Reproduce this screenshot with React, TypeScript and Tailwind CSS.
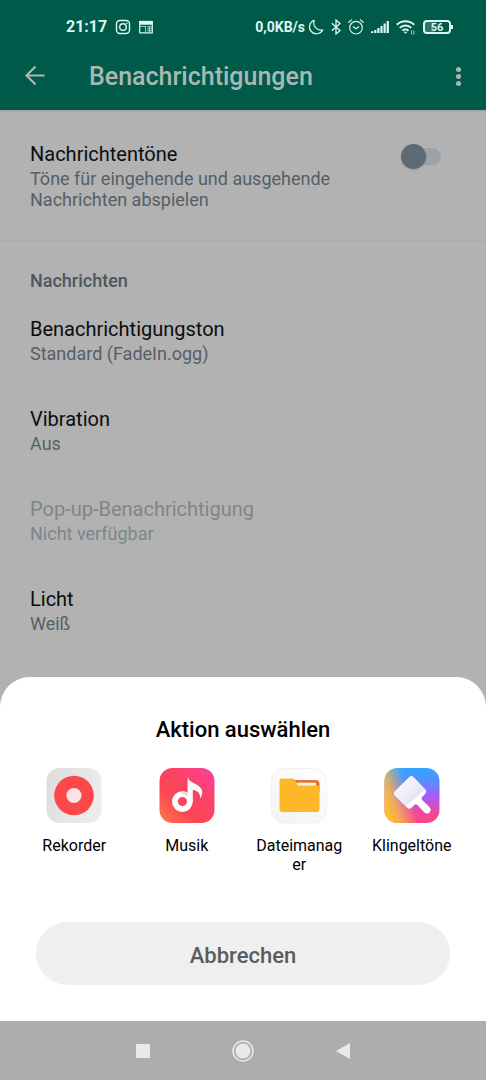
import { useState } from "react";

const settings = [
    { title: "Benachrichtigungston", value: "Standard (FadeIn.ogg)" },
    { title: "Vibration", value: "Aus" },
    { title: "Pop-up-Benachrichtigung", value: "Nicht verfügbar", disabled: true },
    { title: "Licht", value: "Weiß" },
];

const apps = [
    { name: "Rekorder", Icon: RecorderIcon },
    { name: "Musik", Icon: MusicIcon },
    { name: "Dateimanager", Icon: FilesIcon },
    { name: "Klingeltöne", Icon: ThemesIcon },
];

function RecorderIcon() {
    return (
        <svg viewBox="0 0 56 56" className="size-14" aria-hidden="true">
            <defs>
                <linearGradient id="rec-bg" x1="0" y1="0" x2="1" y2="0.4">
                    <stop offset="0" stopColor="#dcdcdc" />
                    <stop offset="1" stopColor="#ececec" />
                </linearGradient>
            </defs>
            <rect x="0.5" y="0" width="55" height="55" rx="13" fill="url(#rec-bg)" />
            <circle cx="28" cy="27.500" r="19.8" fill="#fc4848" />
            <circle cx="28" cy="27.500" r="7.6" fill="#f8e4e4" />
        </svg>
    );
}

function MusicIcon() {
    return (
        <svg viewBox="0 0 56 56" className="size-14" aria-hidden="true">
            <defs>
                <linearGradient id="mus-bg" x1="0" y1="1" x2="1" y2="0">
                    <stop offset="0" stopColor="#ff7a45" />
                    <stop offset="0.35" stopColor="#fb4654" />
                    <stop offset="0.65" stopColor="#fa4368" />
                    <stop offset="1" stopColor="#fb3fa6" />
                </linearGradient>
            </defs>
            <rect x="0.5" y="0" width="55" height="55" rx="13" fill="url(#mus-bg)" />
            <circle cx="23.4" cy="33.6" r="7.5" fill="none" stroke="#fff" strokeWidth="5.8" />
            <path d="M22.500 23.300a10.400 10.400 0 0 1 6.500 1.700v4a8 8 0 0 0-6.500-3z" fill="#ffd3da" />
            <path d="M28.600 9c.6 3 3.200 4.800 7.400 6.800 5 2.400 8.200 5.700 7 10.800-.4 1.500-1 2.800-2 3.900.7-4.600-2-7.800-7.200-8.800v12h-5.200z" fill="#fff" />
        </svg>
    );
}

function FilesIcon() {
    return (
        <svg viewBox="0 0 56 56" className="size-14" aria-hidden="true">
            <defs>
                <linearGradient id="file-bg" x1="0" y1="1" x2="0.6" y2="0">
                    <stop offset="0" stopColor="#f3f3f3" />
                    <stop offset="1" stopColor="#fcfcfc" />
                </linearGradient>
            </defs>
            <rect x="0.5" y="0.5" width="55" height="54.500" rx="13" fill="url(#file-bg)" stroke="#f1f1f1" />
            <path d="M20 12h25a3.500 3.500 0 0 1 3.500 3.500V24H20z" fill="#e0763a" />
            <rect x="24" y="14.800" width="21" height="6" rx="1" fill="#fff3e6" />
            <path d="M11 10.500h10.500c1.200 0 2 .4 2.500 1.400l2 4c.6 1.200 1.400 1.600 2.600 1.600H46a2.500 2.500 0 0 1 2.500 2.500V41a3 3 0 0 1-3 3H11.500a3 3 0 0 1-3-3V13a2.500 2.500 0 0 1 2.500-2.500z" fill="#fdb827" />
        </svg>
    );
}

function ThemesIcon() {
    return (
        <svg viewBox="0 0 56 56" className="size-14" aria-hidden="true">
            <defs>
                <clipPath id="thm-clip"><rect x="0.5" y="0" width="55" height="55" rx="13" /></clipPath>
                <linearGradient id="thm-base" x1="0.5" y1="0" x2="0.5" y2="1">
                    <stop offset="0" stopColor="#2fa8ff" />
                    <stop offset="0.25" stopColor="#5a8cff" />
                    <stop offset="0.5" stopColor="#a65cf8" />
                    <stop offset="0.8" stopColor="#f0489c" />
                    <stop offset="1" stopColor="#ff437c" />
                </linearGradient>
                <linearGradient id="thm-yellow" x1="0" y1="0.6" x2="0.45" y2="0.45">
                    <stop offset="0" stopColor="#fcc02c" />
                    <stop offset="0.35" stopColor="#f5b84c" stopOpacity="0.85" />
                    <stop offset="1" stopColor="#f5b84c" stopOpacity="0" />
                </linearGradient>
                <linearGradient id="thm-brush" x1="0" y1="0" x2="1" y2="1">
                    <stop offset="0" stopColor="#fff" />
                    <stop offset="1" stopColor="#dcdaf3" />
                </linearGradient>
            </defs>
            <g clipPath="url(#thm-clip)">
                <rect width="56" height="56" fill="url(#thm-base)" />
                <rect width="56" height="56" fill="url(#thm-yellow)" />
            </g>
            <path d="M25.300 9.300a3 3 0 0 1 4.200 0L41.200 21.500a3 3 0 0 1 0 4.200l-3 3.300c-1 1.100-.8 2 .1 3l7.200 7.300a3.600 3.600 0 0 1-5.200 5l-7-7.300c-1-1-2-1-3 0L27.500 39.700a3 3 0 0 1-4.200 0L11 27.500a3 3 0 0 1 0-4.200z" fill="#fff" />
            <path d="M25.300 9.300a3 3 0 0 1 4.200 0L41 21.300 22 38.500 11 27.500a3 3 0 0 1 0-4.200z" fill="url(#thm-brush)" />
        </svg>
    );
}

function StatusBar() {
    return (
        <div className="flex h-[30px] items-center justify-between pr-[33px] pl-[66px] text-[#daf8ef]">
            <div className="flex items-center gap-2">
                <span className="text-base font-bold">21:17</span>
                <svg viewBox="0 0 16 16" className="size-4" fill="none" stroke="currentColor" strokeWidth="1.400" aria-hidden="true">
                    <rect x="1.500" y="1.500" width="13" height="13" rx="3.500" />
                    <circle cx="8" cy="8" r="3.300" />
                    <circle cx="11.800" cy="4.200" r="0.500" fill="currentColor" strokeWidth="0.600" />
                </svg>
                <svg viewBox="0 0 14 14" className="size-3.5" aria-hidden="true">
                    <path d="M.7 1.500h12.600v11.300H.7z" fill="none" stroke="currentColor" strokeWidth="1.200" />
                    <path d="M.2 1.500 1.500.5l1.300 1 1.300-1 1.400 1 1.500-1 1.400 1 1.400-1 1.300 1 1.300-1 1.400 1v3.300H.2z" fill="currentColor" />
                    <path d="M1 6.500h5.500M6.500 6v6.500M8 6.800h5M8 8.800h5M8 10.800h5M10.400 6v6.500" stroke="currentColor" strokeWidth="0.700" />
                </svg>
            </div>
            <div className="flex items-center gap-[7px]">
                <div className="flex items-center gap-[3px]">
                    <span className="text-sm font-bold">0,0KB/s</span>
                    <svg viewBox="0 0 16 16" className="size-4" fill="none" stroke="currentColor" strokeWidth="1.200" strokeLinejoin="round" aria-hidden="true">
                        <path d="M6.200 1.200A7 7 0 1 0 14.800 10.800 A7.300 7.300 0 0 1 6.200 1.200z" />
                    </svg>
                </div>
                <svg viewBox="0 0 10 16" className="h-4 w-2.5" fill="none" stroke="currentColor" strokeWidth="1.300" aria-hidden="true">
                    <path d="M.8 4.300 9 11.600 5 15V1l4 3.400L.8 11.700" />
                </svg>
                <svg viewBox="0 0 16 16" className="size-4" fill="none" stroke="currentColor" strokeWidth="1.200" strokeLinecap="round" aria-hidden="true">
                    <circle cx="8" cy="8.700" r="6.300" />
                    <path d="M.8 3.300 3.600.9M15.200 3.300 12.400.9M5.200 7.800 8 9.800l2.800-2" />
                </svg>
                <svg viewBox="0 0 18 14" className="h-3.5 w-[18px]" fill="currentColor" aria-hidden="true">
                    <path d="M0 11.300h2.300V13H0zM3.200 10h2.200v3H3.200zM6.300 8h2.200v5H6.300zM9.400 6h2.200v7H9.400zM12.500 3.500h2.200V13h-2.200zM15.600 1h2.300v12h-2.300z" />
                </svg>
                <svg viewBox="0 0 20 16" className="h-4 w-5" fill="none" stroke="currentColor" strokeWidth="1.900" aria-hidden="true">
                    <path d="M.8 5.800a12.500 12.500 0 0 1 17.400 0M3.700 8.900a8.300 8.300 0 0 1 11.600 0M6.500 11.700a4.300 4.300 0 0 1 6 0" />
                    <path d="m9.500 14.800-1.600-1.600a2.300 2.300 0 0 1 3.200 0z" fill="currentColor" strokeWidth="0" />
                    <path d="M15.600 11.500v4M17.900 11.500v4" strokeWidth="0.800" />
                </svg>
                <div className="flex items-center">
                    <span className="flex h-3.5 w-7 items-center justify-center rounded-sm border-2 border-current bg-linear-to-r from-[#2f7565] from-40% to-transparent to-40% text-[11px] leading-none font-bold">
                        56
                    </span>
                    <span className="h-1 w-0.5 bg-current" />
                </div>
            </div>
        </div>
    );
}

export default function App() {
    const [sounds, setSounds] = useState(false);

    return (
        <div className="flex min-h-screen flex-col bg-[#b2b2b2] font-[Roboto,sans-serif]">
            <header className="bg-[#005a49] pt-3 shadow-sm">
                <StatusBar />
                <div className="flex h-[68px] items-center pr-4 pl-6 text-[#a9b8b2]">
                    <button type="button" aria-label="Zurück" className="mr-[43px]">
                        <svg viewBox="0 0 22 22" className="size-[22px]" fill="none" stroke="currentColor" strokeWidth="2.200" aria-hidden="true">
                            <path d="M20.500 10.500H3M11.500 1.500 2.500 10.500l9 9" />
                        </svg>
                    </button>
                    <h1 className="flex-1 pt-0.5 text-[25px] font-medium">Benachrichtigungen</h1>
                    <button type="button" aria-label="Weitere Optionen" className="flex w-6 flex-col items-center gap-0.5">
                        <span className="size-[5px] rounded-full bg-current" />
                        <span className="size-[5px] rounded-full bg-current" />
                        <span className="size-[5px] rounded-full bg-current" />
                    </button>
                </div>
            </header>

            <main className="flex-1 text-[#0a0d0f]">
                <label className="flex items-start justify-between border-b border-[#aaabac] pt-8 pr-[45px] pb-[30px] pl-[30px]">
                    <span className="flex max-w-[310px] flex-col gap-0.5">
                        <span className="text-xl leading-6">Nachrichtentöne</span>
                        <span className="text-lg leading-[21px] text-[#555f66]">Töne für eingehende und ausgehende Nachrichten abspielen</span>
                    </span>
                    <span className="relative mt-0.5 flex h-[25px] w-10 items-center justify-end">
                        <input
                            type="checkbox"
                            role="switch"
                            checked={sounds}
                            onChange={(e) => setSounds(e.target.checked)}
                            className="peer h-[17px] w-9 appearance-none rounded-full bg-[#9ca3a8]"
                        />
                        <span className="absolute top-0 left-0 size-[25px] rounded-full bg-[#5d6b74] shadow-sm peer-checked:left-[15px]" />
                    </span>
                </label>

                <h2 className="mb-[3px] pt-7 pl-[30px] text-lg leading-6 font-medium text-[#4d575e]">Nachrichten</h2>
                {settings.map((item) => (
                    <button
                        key={item.title}
                        type="button"
                        disabled={item.disabled}
                        className="flex w-full flex-col gap-0.5 px-[30px] pt-[21px] pb-[22px] text-left disabled:text-[#7d868b]"
                    >
                        <span className="text-xl leading-6">{item.title}</span>
                        <span className={item.disabled ? "text-lg leading-[21px]" : "text-lg leading-[21px] text-[#555f66]"}>{item.value}</span>
                    </button>
                ))}
            </main>

            <section role="dialog" aria-labelledby="sheet-title" className="rounded-t-[30px] bg-white pt-[41px] pb-9 text-black">
                <h2 id="sheet-title" className="text-center text-[22px] leading-6 font-medium">Aktion auswählen</h2>
                <div className="mt-[26px] grid grid-cols-4 px-[18px]">
                    {apps.map(({ name, Icon }) => (
                        <button key={name} type="button" className="flex flex-col items-center gap-3">
                            <Icon />
                            <span className="w-[92px] text-base leading-[19px] break-all">{name}</span>
                        </button>
                    ))}
                </div>
                <div className="mt-12 px-9">
                    <button type="button" className="h-[63px] w-full rounded-full bg-[#efefef] pt-1 text-[22px] font-medium text-[#5c5c5c]">
                        Abbrechen
                    </button>
                </div>
            </section>

            <nav className="flex h-[59px] items-center justify-center gap-[79px] bg-[#abadaf] text-[#e7e9eb]">
                <button type="button" aria-label="Letzte Apps" className="p-[3px]">
                    <span className="block size-3.5 bg-current" />
                </button>
                <button type="button" aria-label="Startseite">
                    <svg viewBox="0 0 22 22" className="size-[22px]" aria-hidden="true">
                        <circle cx="11" cy="11" r="10" fill="none" stroke="currentColor" strokeWidth="1.500" />
                        <circle cx="11" cy="11" r="7.500" fill="currentColor" />
                    </svg>
                </button>
                <button type="button" aria-label="Zurück" className="p-0.5">
                    <svg viewBox="0 0 16 16" className="size-4" fill="currentColor" aria-hidden="true">
                        <path d="M1 8 15 0v16z" />
                    </svg>
                </button>
            </nav>
        </div>
    );
}
